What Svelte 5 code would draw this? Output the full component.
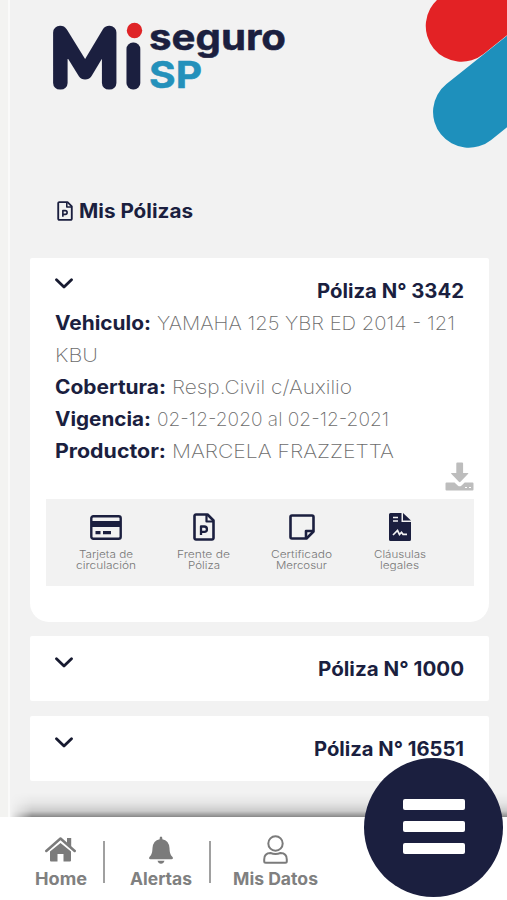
<script>
  const policy = [
    [{ t: 'Vehiculo:', w: 96, b: true }, { t: 'YAMAHA 125 YBR ED 2014 - 121', w: 298 }],
    [{ t: 'KBU', w: 43 }],
    [{ t: 'Cobertura:', w: 111, b: true }, { t: 'Resp.Civil c/Auxilio', w: 180 }],
    [{ t: 'Vigencia:', w: 96, b: true }, { t: '02-12-2020 al 02-12-2021', w: 232 }],
    [{ t: 'Productor:', w: 111, b: true }, { t: 'MARCELA FRAZZETTA', w: 222 }]
  ];
  const documents = [
    { icon: 'card', lines: [['Tarjeta de', 54], ['circulación', 60]] },
    { icon: 'page', lines: [['Frente de', 53], ['Póliza', 32]] },
    { icon: 'note', lines: [['Certificado', 61], ['Mercosur', 51]] },
    { icon: 'contract', lines: [['Cláusulas', 52], ['legales', 39]] }
  ];
  const others = [
    { title: 'Póliza N° 1000', w: 146 },
    { title: 'Póliza N° 16551', w: 150 }
  ];
</script>

{#snippet label(text, w, h, base, kind)}
  <svg class="label {kind}" width={w} height={h}>
    <text x="0" y={base} textLength={w} lengthAdjust="spacingAndGlyphs">{text}</text>
  </svg>
{/snippet}

{#snippet chevron()}
  <svg class="chevron" width="18" height="12" viewBox="0 0 18 12"><path d="M1.500 1.700 9 9l7.500-7.300" /></svg>
{/snippet}

{#snippet pageIcon(w, h)}
  <svg width={w} height={h} viewBox="0 0 22 28" fill="none" stroke="#1b1f3f" stroke-width="2.600" stroke-linejoin="round">
    <path d="M3 1.500h11.500l6 6V25a1.500 1.500 0 0 1-1.500 1.500H3A1.500 1.500 0 0 1 1.500 25V3A1.500 1.500 0 0 1 3 1.500Z" />
    <path d="M13.500 2v6.500H20" stroke-width="2.200" />
    <path d="M8 22v-8.500h3.300a2.500 2.500 0 0 1 0 5.300H8" stroke-width="2.300" />
  </svg>
{/snippet}

<div class="screen">
  <header>
    <svg class="logo" width="240" height="90" viewBox="0 0 240 90">
      <text class="mark" transform="translate(1.300 72.500) scale(1.060 1.010)" font-size="71">M</text>
      <text class="mark" transform="translate(76 72.800)" font-size="71">ı</text>
      <circle cx="84.500" cy="20.500" r="7.700" fill="#df2427" />
      <text class="word" x="99" y="40" font-size="36" textLength="137" lengthAdjust="spacingAndGlyphs">seguro</text>
      <text class="word blue" x="99" y="77.500" font-size="37" textLength="53" lengthAdjust="spacingAndGlyphs">SP</text>
    </svg>
    <svg class="pills" width="87" height="155" viewBox="0 0 87 155" fill="none" stroke-linecap="round" stroke-width="71.500">
      <path d="M41.500 26 121-38" stroke="#e32225" />
      <path d="M48.800 112 130 47" stroke="#1e90bc" />
    </svg>
  </header>

  <main>
    <h1>{@render pageIcon(16, 20)}{@render label('Mis Pólizas', 114, 28, 21, 'bold')}</h1>

    <section class="card open">
      <div class="head">{@render chevron()}{@render label('Póliza N° 3342', 147, 28, 21.5, 'bold')}</div>
      <div class="details">
        {#each policy as row}
          <div class="row">
            {#each row as part}{@render label(part.t, part.w, 32, 22.5, part.b ? 'bold' : 'thin')}{/each}
          </div>
        {/each}
      </div>
      <svg class="download" width="29" height="29" viewBox="0 0 29 29" fill="#bdbdbd">
        <path d="M11.300 1.500q0-1 1-1h4.800q1 0 1 1V11h4.700q1 0 .4.800l-7.700 8q-.8.700-1.600 0l-7.700-8q-.5-.8.400-.8h4.700Z" />
        <path d="M1.500 20.500h8l3.500 3.200q1.700 1 3.300 0l3.400-3.200h7.800q1 0 1 1v6q0 1-1 1h-26q-1 0-1-1v-6q0-1 1-1Z" />
        <path d="M20 25.500h2m2 0h2" stroke="#fff" stroke-width="1.200" />
      </svg>
      <div class="documents">
        {#each documents as doc}
          <div class="document">
            <div class="icon">
              {#if doc.icon === 'card'}
                <svg width="32" height="25" viewBox="0 0 32 25">
                  <rect x="1.300" y="1.300" width="29.400" height="22.400" rx="2" fill="none" stroke="#1b1f3f" stroke-width="2.400" />
                  <path d="M1 6h30v6H1ZM5.500 16h5v3.300h-5Zm7.500 0h8v3.300h-8Z" fill="#1b1f3f" />
                </svg>
              {:else if doc.icon === 'page'}
                {@render pageIcon(22, 28)}
              {:else if doc.icon === 'note'}
                <svg width="26" height="26" viewBox="0 0 26 26" fill="none" stroke="#1b1f3f" stroke-width="2.600" stroke-linejoin="round">
                  <path d="M3 1.500h20q1.500 0 1.500 1.500v14.500l-7 7H3q-1.500 0-1.500-1.500V3Q1.500 1.500 3 1.500Z" />
                  <path d="M17 24v-7h7" />
                </svg>
              {:else}
                <svg width="22" height="28" viewBox="0 0 22 28">
                  <path d="M1.500 0H12.500V9H22v17.500q0 1.500-1.500 1.500h-19Q0 28 0 26.500v-25Q0 0 1.500 0ZM14 0l8 7.500H14Z" fill="#1b1f3f" />
                  <path d="M4 4.500h5M4 8h5M4 22l4.500-4.500 2 4 2-2.200 1.500 2H18" fill="none" stroke="#f2f2f2" stroke-width="1.700" />
                </svg>
              {/if}
            </div>
            {#each doc.lines as line}{@render label(line[0], line[1], 11, 9, 'small')}{/each}
          </div>
        {/each}
      </div>
    </section>

    {#each others as item}
      <section class="card">
        <div class="head">{@render chevron()}{@render label(item.title, item.w, 28, 21, 'bold')}</div>
      </section>
    {/each}
  </main>

  <nav>
    <div class="tab home">
      <svg width="31" height="26" viewBox="0 0 31 26" fill="#7b7b7b">
        <path d="M15.500 7 26 15.500V24.500q0 1-1 1h-6.500V18h-6v7.500H6q-1 0-1-1v-9Z" />
        <path d="M1.300 15 15.500 2.500 29.700 15" fill="none" stroke="#7b7b7b" stroke-width="2.500" stroke-linecap="round" stroke-linejoin="round" />
        <path d="M22 2h4.200v9L22 7Z" />
      </svg>
      {@render label('Home', 52, 20, 15, 'nav')}
    </div>
    <i></i>
    <div class="tab alerts">
      <svg width="26" height="28" viewBox="0 0 26 28" fill="#7b7b7b">
        <path d="M11.700 2q0-1.500 1.300-1.500T14.300 2v1.200Q21 4.500 21.500 12c.2 6 1.500 7.300 3 9 .9 1 .5 2.200-1 2.200h-21c-1.500 0-1.900-1.200-1-2.200 1.500-1.700 2.800-3 3-9Q5 4.500 11.700 3.200ZM9.500 24.800h7q-.9 3-3.500 3t-3.500-3Z" />
      </svg>
      {@render label('Alertas', 62, 20, 15, 'nav')}
    </div>
    <i></i>
    <div class="tab data">
      <svg width="25" height="29" viewBox="0 0 25 29" fill="none" stroke="#7b7b7b" stroke-width="2" stroke-linejoin="round">
        <circle cx="12.500" cy="8.500" r="7.200" />
        <path d="M7.500 18q5 2 10 0 6.300 0 6.300 6.500v1.800q0 1.500-1.500 1.500H2.700q-1.500 0-1.500-1.500v-1.800Q1.200 18 7.500 18Z" />
      </svg>
      {@render label('Mis Datos', 85, 20, 15, 'nav')}
    </div>
  </nav>
  <button class="fab" aria-label="Menu"><span></span><span></span><span></span></button>
</div>

<style>
  :global(body) { margin: 0; }
  .screen {
    position: relative;
    box-sizing: border-box;
    width: 507px;
    height: 900px;
    overflow: hidden;
    display: flex;
    flex-direction: column;
    background: linear-gradient(90deg, #f3f3f1 8px, #fafaf9 8px 10px, #f2f2f2 10px);
    font-family: Inter, "Open Sans", sans-serif;
  }
  svg { display: block; flex: none; }
  header { display: flex; justify-content: space-between; height: 155px; padding-left: 50px; }
  .logo { margin-top: 10px; overflow: visible; }
  .mark { font-family: Lato, sans-serif; font-weight: 100; fill: #1b1f3f; stroke: #1b1f3f; stroke-width: 13px; stroke-linejoin: round; }
  .word { font-family: Inter, sans-serif; font-weight: 700; fill: #1b1f3f; stroke: #1b1f3f; stroke-width: .5px; stroke-linejoin: round; }
  .blue { fill: #2491bb; stroke: #2491bb; }
  main { flex: 1; padding: 42px 18px 0 30px; }
  h1 { display: flex; align-items: center; gap: 6px; margin: 0 0 33px; padding-left: 27px; height: 28px; }
  .label { overflow: visible; }
  .bold { font-size: 19.500px; font-weight: 700; fill: #1b1f3f; }
  .thin { font-size: 19.300px; font-weight: 200; fill: #6c6c6c; }
  .small { font-size: 10.500px; font-weight: 300; fill: #777; }
  .nav { font-size: 17px; font-weight: 700; fill: #808080; }
  .card { box-sizing: border-box; height: 65px; margin-bottom: 15px; padding-top: 19px; background: #fff; border-radius: 2px; }
  .card.open { height: 364px; margin-bottom: 14px; padding-top: 18px; border-radius: 2px 2px 19px 19px; }
  .head { display: flex; justify-content: space-between; padding: 0 25px 0 25px; height: 31px; }
  .chevron { margin-top: 2px; fill: none; stroke: #171a30; stroke-width: 2.800; stroke-linecap: round; stroke-linejoin: round; }
  .details { padding-left: 25px; }
  .row { display: flex; gap: 6px; height: 32px; }
  .download { margin: -5px 15px 0 auto; }
  .documents { display: flex; box-sizing: border-box; width: 428px; height: 87px; margin: 8px 0 0 16px; padding: 14px 0 0 10.500px; background: #f2f2f2; }
  .document { display: flex; flex-direction: column; align-items: center; width: 98px; }
  .icon { display: flex; align-items: center; height: 28px; margin: 0 0 8px; }
  nav { position: relative; display: flex; box-sizing: border-box; height: 83px; padding-left: 30px; background: #fff; }
  nav::before { content: ""; position: absolute; left: 10px; right: 0; top: -24px; height: 24px; background: linear-gradient(#0000, #0000000c 40%, #00000028 75%, #00000070); mask: linear-gradient(90deg, #0000, #000 22px); }
  nav i { width: 2px; height: 42px; margin-top: 24px; background: #a0a0a0; }
  .tab { display: flex; flex-direction: column; align-items: center; justify-content: flex-end; height: 73px; }
  .tab > svg:first-child { margin-bottom: 6px; }
  .home { width: 61px; margin-right: 12px; }
  .home > svg:first-child { margin-bottom: 8px; }
  .alerts { width: 62px; margin: 0 17px 0 25px; }
  .data { width: 85px; margin-left: 22px; }
  .fab { position: absolute; left: 364px; top: 758px; display: flex; flex-direction: column; align-items: center; justify-content: center; gap: 11px; width: 139px; height: 139px; padding: 0 0 2px; border: 0; border-radius: 50%; background: #1b1f3f; }
  .fab span { width: 62px; height: 10.700px; border-radius: 2px; background: #fff; }
</style>
